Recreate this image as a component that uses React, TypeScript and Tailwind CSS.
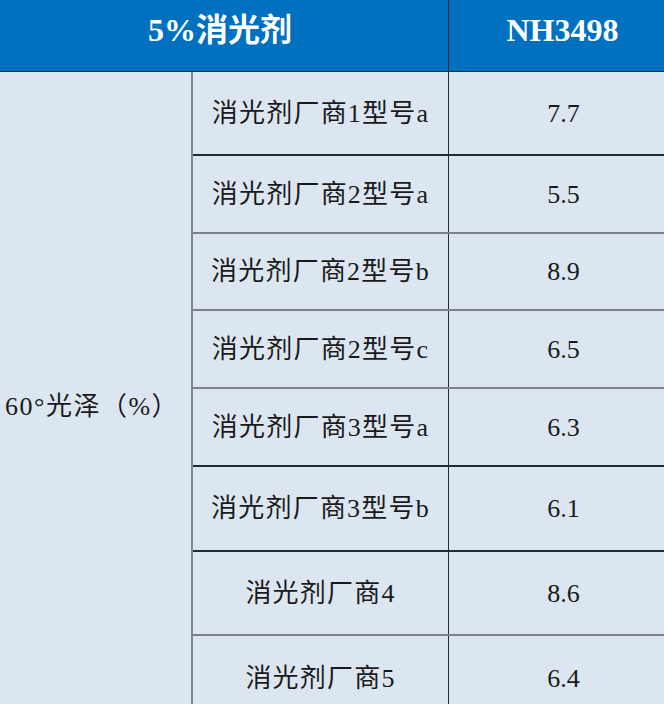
import React from "react";

const rows: { name: string; value: string; h: string; line: string }[] = [
  { name: "消光剂厂商1型号a", value: "7.7", h: "h-[84px]", line: "border-[#222a33]" },
  { name: "消光剂厂商2型号a", value: "5.5", h: "h-[78px]", line: "border-[#7d8288]" },
  { name: "消光剂厂商2型号b", value: "8.9", h: "h-[77px]", line: "border-[#7d8288]" },
  { name: "消光剂厂商2型号c", value: "6.5", h: "h-[78px]", line: "border-[#7d8288]" },
  { name: "消光剂厂商3型号a", value: "6.3", h: "h-[78px]", line: "border-[#222a33]" },
  { name: "消光剂厂商3型号b", value: "6.1", h: "h-[85px]", line: "border-[#222a33]" },
  { name: "消光剂厂商4", value: "8.6", h: "h-[84px]", line: "border-[#7d8288]" },
  { name: "消光剂厂商5", value: "6.4", h: "h-[84px]", line: "border-[#7d8288]" },
];

export default function App() {
  return (
    <div className="w-[664px] h-[704px] overflow-hidden bg-[#dce6f0] text-[#1a1a1a] font-['Liberation_Serif','DejaVu_Serif','Noto_Sans_CJK_SC',serif]">
      <div className="w-[676px] flex flex-col">
        <div className="flex h-[72px] bg-[#0070c0] border-b border-[#1f2a36] text-white font-bold text-[32px]">
          <div className="w-[449px] border-r border-[#1f2a36] flex items-center justify-center pr-[8px] pb-[12px]">
            5%消光剂
          </div>
          <div className="flex-1 flex items-center justify-center pb-[12px]">NH3498</div>
        </div>
        <div className="flex text-[26px]">
          <div className="w-[193px] border-r-2 border-[#84898f] flex items-center pl-[5px] pt-[20px] tracking-[1.5px]">
            60°光泽（%）
          </div>
          <div className="flex-1 flex flex-col">
            {rows.map((r, i) => (
              <div
                key={i}
                className={`flex ${r.h} ${i < rows.length - 1 ? "border-b-2" : ""} ${r.line}`}
              >
                <div className="w-[256px] border-r-[1.5px] border-[#222a33] flex items-center justify-center tracking-[1.2px]">
                  {r.name}
                </div>
                <div className="flex-1 flex items-center justify-center pl-[2px]">{r.value}</div>
              </div>
            ))}
          </div>
        </div>
      </div>
    </div>
  );
}
